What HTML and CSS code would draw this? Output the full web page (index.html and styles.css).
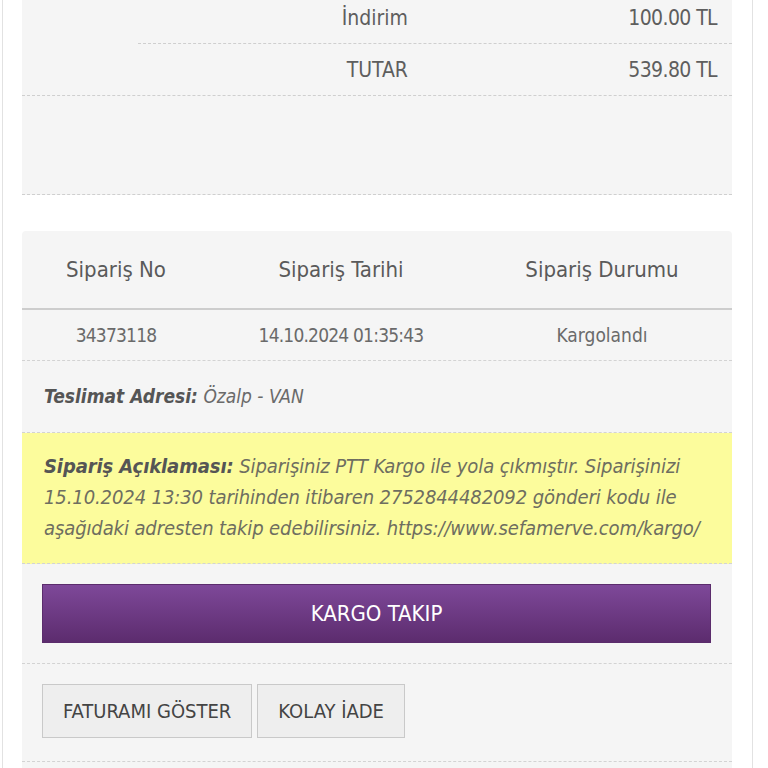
FILE: index.html
```html
<!DOCTYPE html>
<html lang="tr">
<head>
<meta charset="utf-8">
<link rel="stylesheet" href="styles.css">
</head>
<body>
<div class="page">
  <section class="summary">
    <div class="sum-row sum-row--inset">
      <div class="sum-label">İndirim</div>
      <div class="sum-value">100.00 TL</div>
    </div>
    <div class="sum-row">
      <div class="sum-label">TUTAR</div>
      <div class="sum-value">539.80 TL</div>
    </div>
    <div class="sum-blank"></div>
  </section>

  <section class="order">
    <div class="order-head">
      <div>Sipariş No</div>
      <div>Sipariş Tarihi</div>
      <div>Sipariş Durumu</div>
    </div>
    <div class="order-data">
      <div class="num">34373118</div>
      <div class="num">14.10.2024 01:35:43</div>
      <div>Kargolandı</div>
    </div>
    <div class="address"><b>Teslimat Adresi:</b> Özalp - VAN</div>
    <div class="note"><b>Sipariş Açıklaması:</b> Siparişiniz PTT Kargo ile yola çıkmıştır. Siparişinizi<br>15.10.2024 13:30 tarihinden itibaren 2752844482092 gönderi kodu ile<br>aşağıdaki adresten takip edebilirsiniz. https://www.sefamerve.com/kargo/</div>
    <div class="track-wrap">
      <button class="track-btn">KARGO TAKIP</button>
    </div>
    <div class="actions">
      <button class="act-btn">FATURAMI GÖSTER</button>
      <button class="act-btn">KOLAY İADE</button>
    </div>
    <div class="tail"></div>
  </section>
</div>
</body>
</html>
```

FILE: styles.css
```css
html, body {
  margin: 0;
  padding: 0;
  background: #fff;
}
body {
  font-family: "DejaVu Sans Condensed", "DejaVu Sans", sans-serif;
  font-stretch: condensed;
  color: #555;
  overflow: hidden;
  height: 768px;
}
.page {
  margin-left: 2px;
  width: 710px;
  padding: 0 20px 0 19px;
  border-left: 1px solid #e2e2e2;
  border-right: 1px solid #e2e2e2;
  min-height: 800px;
}
.summary {
  background: #f5f5f5;
  margin-top: -8px;
}
.sum-row {
  display: grid;
  grid-template-columns: 1fr 312px;
  height: 51px;
  align-items: center;
  font-size: 21px;
  color: #5e5e5e;
  border-bottom: 1px dashed #cfcfcf;
}
.sum-row--inset {
  margin-left: 116px;
}
.sum-label {
  text-align: right;
  padding-right: 12px;
}
.sum-value {
  text-align: right;
  padding-right: 15px;
  letter-spacing: -0.6px;
}
.sum-blank {
  height: 98px;
  border-bottom: 1px dashed #cfcfcf;
}
.order {
  margin-top: 36px;
  background: #f5f5f5;
  border-radius: 4px 4px 0 0;
}
.order-head, .order-data {
  display: grid;
  grid-template-columns: 188px 262px 260px;
  text-align: center;
}
.order-head {
  height: 77px;
  align-items: center;
  font-size: 22px;
  color: #5a5a5a;
  border-bottom: 2px solid #cdcdcd;
}
.order-data {
  height: 50px;
  align-items: center;
  font-size: 19px;
  color: #6a6a6a;
  border-bottom: 1px dashed #d3d3d3;
}
.num {
  letter-spacing: -0.8px;
}
.address {
  height: 71px;
  line-height: 71px;
  padding-left: 22px;
  font-size: 19px;
  font-style: italic;
  color: #6a6a6a;
  border-bottom: 1px dashed #d3d3d3;
}
.address b, .note b {
  color: #555;
}
.note {
  background: #fcfc9c;
  padding: 18px 22px 19px;
  font-size: 20px;
  line-height: 31px;
  font-style: italic;
  color: #6e6e60;
  letter-spacing: -0.1px;
  border-bottom: 1px dashed #d3d3d3;
  white-space: nowrap;
}
.track-wrap {
  padding: 20px 21px 20px 20px;
  border-bottom: 1px dashed #d3d3d3;
}
.track-btn {
  display: block;
  width: 100%;
  height: 59px;
  border: 1px solid #5b2c6c;
  background: linear-gradient(#7e4899, #5c2c6e);
  color: #fff;
  font-family: inherit;
  font-size: 22px;
  cursor: pointer;
}
.actions {
  display: flex;
  gap: 5px;
  padding: 20px 20px 23px;
  border-bottom: 1px dashed #d3d3d3;
}
.act-btn {
  height: 54px;
  padding: 0 20px;
  background: #eeeeee;
  border: 1px solid #c9c9c9;
  color: #444;
  font-family: inherit;
  font-size: 20px;
}
.tail {
  height: 40px;
}
```
